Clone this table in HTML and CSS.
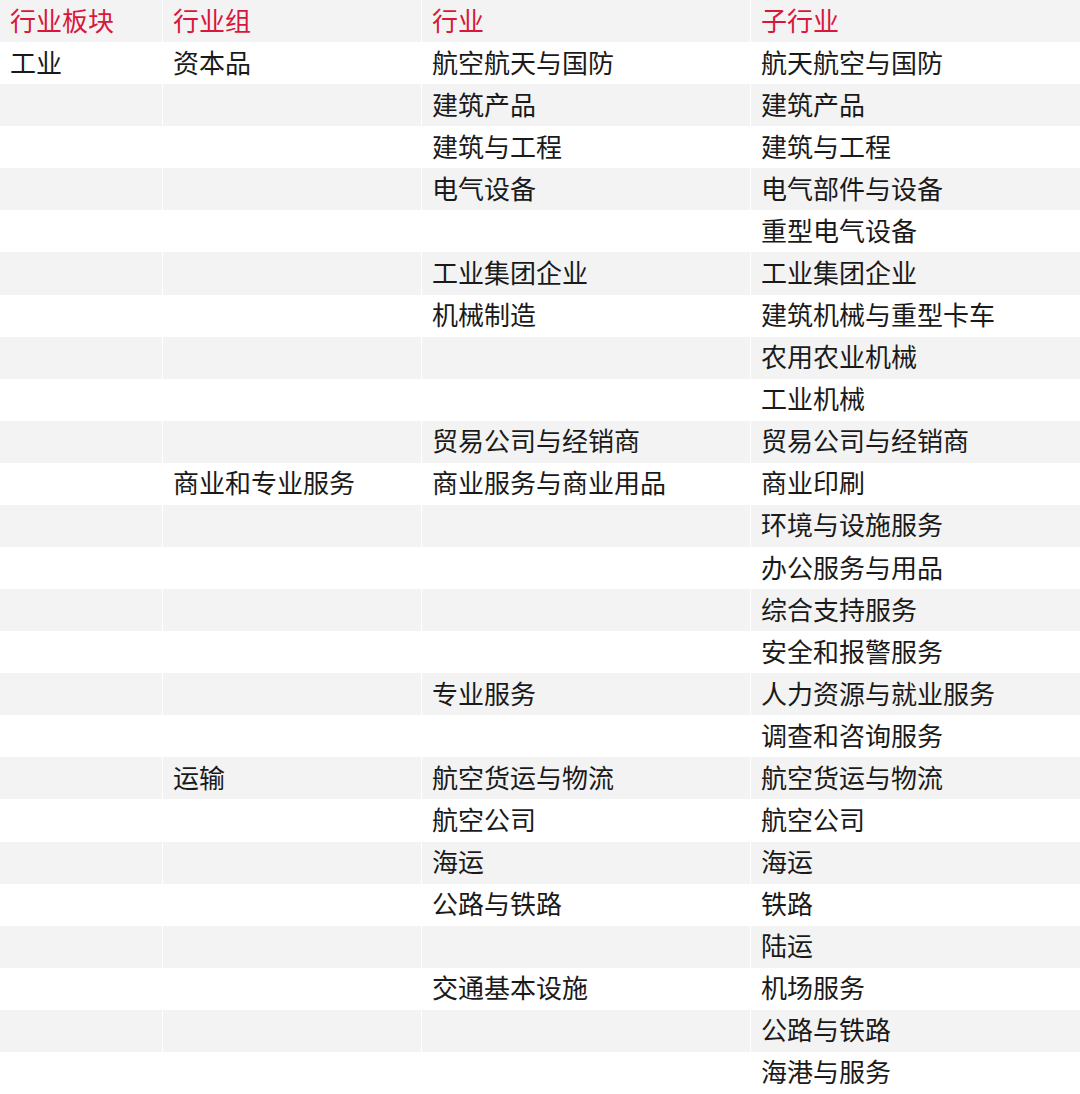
FILE: index.html
```html
<!DOCTYPE html>
<html lang="zh-CN">
<head>
<meta charset="utf-8">
<title>行业分类</title>
<link rel="stylesheet" href="styles.css">
</head>
<body>
<table class="gics">
  <colgroup>
    <col class="c1"><col class="c2"><col class="c3"><col class="c4">
  </colgroup>
  <thead>
    <tr><th>行业板块</th><th>行业组</th><th>行业</th><th>子行业</th></tr>
  </thead>
  <tbody>
    <tr><td>工业</td><td>资本品</td><td>航空航天与国防</td><td>航天航空与国防</td></tr>
    <tr><td></td><td></td><td>建筑产品</td><td>建筑产品</td></tr>
    <tr><td></td><td></td><td>建筑与工程</td><td>建筑与工程</td></tr>
    <tr><td></td><td></td><td>电气设备</td><td>电气部件与设备</td></tr>
    <tr><td></td><td></td><td></td><td>重型电气设备</td></tr>
    <tr><td></td><td></td><td>工业集团企业</td><td>工业集团企业</td></tr>
    <tr><td></td><td></td><td>机械制造</td><td>建筑机械与重型卡车</td></tr>
    <tr><td></td><td></td><td></td><td>农用农业机械</td></tr>
    <tr><td></td><td></td><td></td><td>工业机械</td></tr>
    <tr><td></td><td></td><td>贸易公司与经销商</td><td>贸易公司与经销商</td></tr>
    <tr><td></td><td>商业和专业服务</td><td>商业服务与商业用品</td><td>商业印刷</td></tr>
    <tr><td></td><td></td><td></td><td>环境与设施服务</td></tr>
    <tr><td></td><td></td><td></td><td>办公服务与用品</td></tr>
    <tr><td></td><td></td><td></td><td>综合支持服务</td></tr>
    <tr><td></td><td></td><td></td><td>安全和报警服务</td></tr>
    <tr><td></td><td></td><td>专业服务</td><td>人力资源与就业服务</td></tr>
    <tr><td></td><td></td><td></td><td>调查和咨询服务</td></tr>
    <tr><td></td><td>运输</td><td>航空货运与物流</td><td>航空货运与物流</td></tr>
    <tr><td></td><td></td><td>航空公司</td><td>航空公司</td></tr>
    <tr><td></td><td></td><td>海运</td><td>海运</td></tr>
    <tr><td></td><td></td><td>公路与铁路</td><td>铁路</td></tr>
    <tr><td></td><td></td><td></td><td>陆运</td></tr>
    <tr><td></td><td></td><td>交通基本设施</td><td>机场服务</td></tr>
    <tr><td></td><td></td><td></td><td>公路与铁路</td></tr>
    <tr><td></td><td></td><td></td><td>海港与服务</td></tr>
  </tbody>
</table>
</body>
</html>
```

FILE: styles.css
```css
html, body {
  margin: 0;
  padding: 0;
  background: #ffffff;
}

body {
  font-family: "Noto Sans CJK SC", "Noto Sans", sans-serif;
  color: #1a1a1a;
}

.gics {
  width: 1080px;
  table-layout: fixed;
  border-collapse: separate;
  border-spacing: 0;
  font-size: 26px;
}

.gics .c1 { width: 162px; }
.gics .c2 { width: 259px; }
.gics .c3 { width: 329px; }
.gics .c4 { width: 330px; }

.gics th,
.gics td {
  height: 42.08px;
  padding: 0 0 3px 10px;
  box-sizing: border-box;
  text-align: left;
  vertical-align: middle;
  font-weight: 400;
  line-height: 30px;
  white-space: nowrap;
  border-left: 1px solid #ffffff;
}

.gics th:first-child,
.gics td:first-child {
  border-left: 0;
  padding-left: 10px;
}

.gics th {
  color: #d8173b;
  background: #f3f3f3;
}

.gics tbody tr:nth-child(even) td {
  background: #f3f3f3;
}
```
